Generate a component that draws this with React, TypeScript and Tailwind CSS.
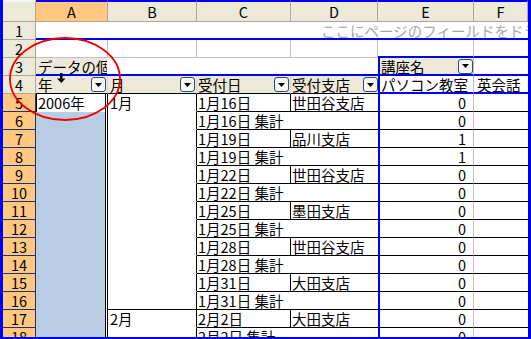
import { clsx } from 'clsx';

type Row = {
  n: number;
  a?: string;
  b?: string;
  c: string;
  d?: string;
  e: string;
  sub?: boolean;
  bEnd?: boolean;
};

const rows: Row[] = [
  { n: 5, a: '2006年', b: '1月', c: '1月16日', d: '世田谷支店', e: '0' },
  { n: 6, c: '1月16日 集計', e: '0', sub: true },
  { n: 7, c: '1月19日', d: '品川支店', e: '1' },
  { n: 8, c: '1月19日 集計', e: '1', sub: true },
  { n: 9, c: '1月22日', d: '世田谷支店', e: '0' },
  { n: 10, c: '1月22日 集計', e: '0', sub: true },
  { n: 11, c: '1月25日', d: '墨田支店', e: '0' },
  { n: 12, c: '1月25日 集計', e: '0', sub: true },
  { n: 13, c: '1月28日', d: '世田谷支店', e: '0' },
  { n: 14, c: '1月28日 集計', e: '0', sub: true },
  { n: 15, c: '1月31日', d: '大田支店', e: '0' },
  { n: 16, c: '1月31日 集計', e: '0', sub: true, bEnd: true },
  { n: 17, b: '2月', c: '2月2日', d: '大田支店', e: '0' },
  { n: 18, c: '2月2日 集計', e: '0', sub: true },
];

function RowHead({ n, sel }: { n: number; sel?: boolean }) {
  return (
    <div
      className={clsx(
        'w-[33px] shrink-0 flex items-center justify-center border-r border-b',
        sel ? 'bg-[#ffc77f] border-[#25306e]' : 'bg-[#ece9d8] border-[#aca899]'
      )}
    >
      {n}
    </div>
  );
}

function ColHead({ w, label, sel }: { w: string; label: string; sel?: boolean }) {
  return (
    <div
      className={clsx(
        w,
        'shrink-0 flex items-center justify-center border-t-2 border-t-[#0000f0] border-r border-r-[#aca899] border-b border-b-[#aca899]',
        sel ? 'bg-[#ffc77f]' : 'bg-[#ece9d8]'
      )}
    >
      {label}
    </div>
  );
}

// little pivot field dropdown
function Drop() {
  return (
    <div className="w-[15px] h-[15px] shrink-0 rounded-[3px] border border-[#2b4a80] bg-[#f7f6f0] flex items-center justify-center">
      <svg width="7" height="4" viewBox="0 0 7 4">
        <path d="M0 0H7L3.5 4Z" fill="#000" />
      </svg>
    </div>
  );
}

export default function App() {
  return (
    <div className="relative w-[531px] h-[339px] overflow-hidden">
      <div className="w-[531px] h-[339px] overflow-hidden bg-white border-l-[3px] border-r-[3px] border-b-2 border-[#0000f0] font-['Noto_Sans_CJK_JP','Noto_Sans',sans-serif] text-[14.5px] leading-[17px] text-black">
        {/* column headers */}
        <div className="flex h-[22px]">
          <div className="w-[33px] shrink-0 bg-[#ece9d8] border-t-2 border-t-[#f4f3ee] border-r border-r-[#aca899] border-b border-b-[#aca899]" />
          <ColHead w="w-[72px]" label="A" sel />
          <ColHead w="w-[89px]" label="B" />
          <ColHead w="w-[94px]" label="C" />
          <ColHead w="w-[87px]" label="D" />
          <ColHead w="w-[96px]" label="E" />
          <ColHead w="flex-1" label="F" />
        </div>

        {/* row 1: page field drop area */}
        <div className="flex h-[18px]">
          <RowHead n={1} />
          <div className="flex-1 border-b-2 border-b-[#0000f0] pl-[285px] whitespace-nowrap overflow-hidden text-[#a8a8a8]">
            ここにページのフィールドをドラッグします
          </div>
        </div>

        {/* row 2 */}
        <div className="flex h-[18px]">
          <RowHead n={2} />
          <div className="w-[72px] shrink-0 border-r border-b border-[#c0c0c0]" />
          <div className="w-[89px] shrink-0 border-r border-b border-[#c0c0c0]" />
          <div className="w-[94px] shrink-0 border-r border-b border-[#c0c0c0]" />
          <div className="w-[87px] shrink-0 border-r border-b border-[#c0c0c0]" />
          <div className="w-[96px] shrink-0 border-r border-r-[#c0c0c0] border-b-2 border-b-[#0000f0]" />
          <div className="flex-1 border-b-2 border-b-[#0000f0]" />
        </div>

        {/* row 3 */}
        <div className="flex h-[18px]">
          <RowHead n={3} />
          <div className="w-[72px] shrink-0 border-b-2 border-b-[#0000f0] flex">
            <div className="w-[71px] bg-[#ece9d8] pl-[2px] whitespace-nowrap overflow-hidden">データの個数</div>
          </div>
          <div className="w-[270px] shrink-0 border-b-2 border-b-[#0000f0]" />
          <div className="w-[96px] shrink-0 border-l-2 border-l-[#0000f0] border-r border-r-[#c0c0c0] border-b-2 border-b-[#0000f0] flex items-center bg-[#ece9d8] pl-px">
            <span className="flex-1">講座名</span>
            <Drop />
          </div>
          <div className="flex-1 border-b-2 border-b-[#0000f0]" />
        </div>

        {/* row 4: row fields */}
        <div className="flex h-[18px]">
          <RowHead n={4} />
          <div className="w-[72px] shrink-0 border-r border-r-[#d8d6cb] border-b border-b-black flex items-center bg-[#ece9d8] pl-[2px] pr-px">
            <span className="flex-1">年</span>
            <Drop />
          </div>
          <div className="w-[89px] shrink-0 border-r border-r-[#d8d6cb] border-b border-b-black flex items-center bg-[#ece9d8] pl-[2px] pr-px">
            <span className="flex-1">月</span>
            <Drop />
          </div>
          <div className="w-[94px] shrink-0 border-r border-r-[#d8d6cb] border-b border-b-black flex items-center bg-[#ece9d8] pl-px pr-px">
            <span className="flex-1">受付日</span>
            <Drop />
          </div>
          <div className="w-[87px] shrink-0 border-b border-b-black flex items-center bg-[#ece9d8] pl-px whitespace-nowrap">
            <span className="flex-1 overflow-hidden">受付支店</span>
            <Drop />
          </div>
          <div className="w-[96px] shrink-0 border-l-2 border-l-[#0000f0] border-r border-r-[#c0c0c0] border-b-2 border-b-[#0000f0] pl-px whitespace-nowrap overflow-hidden">
            パソコン教室
          </div>
          <div className="flex-1 border-b-2 border-b-[#0000f0] pl-[3px] whitespace-nowrap">英会話</div>
        </div>

        {/* data rows */}
        {rows.map((r) => (
          <div key={r.n} className="flex h-[18px] shrink-0">
            <RowHead n={r.n} sel />
            <div className="w-[72px] shrink-0 flex border-r border-black">
              {r.a ? (
                <div className="flex-1 bg-white border-l border-black pl-px whitespace-nowrap">{r.a}</div>
              ) : (
                <div className="flex-1 bg-[#b8cce4]" />
              )}
              <div className="w-px bg-black" />
              <div className="w-px bg-white" />
            </div>
            <div
              className={clsx(
                'w-[89px] shrink-0 border-r border-r-black border-b pl-[2px]',
                r.bEnd ? 'border-b-black' : 'border-b-white'
              )}
            >
              {r.b}
            </div>
            {r.sub ? (
              <div className="w-[181px] shrink-0 border-b border-black pl-px whitespace-nowrap">{r.c}</div>
            ) : (
              <>
                <div className="w-[94px] shrink-0 border-r border-b border-black pl-px whitespace-nowrap">{r.c}</div>
                <div className="w-[87px] shrink-0 border-b border-black pl-px whitespace-nowrap overflow-hidden">
                  {r.d}
                </div>
              </>
            )}
            <div className="w-[96px] shrink-0 border-l-2 border-l-[#0000f0] border-r border-r-[#c0c0c0] border-b border-b-black text-right pr-[7px]">
              {r.e}
            </div>
            <div className="flex-1 border-b border-black" />
          </div>
        ))}
      </div>

      {/* annotation: red circle and drag cursor */}
      <svg className="absolute inset-0 pointer-events-none" width="531" height="339">
        <ellipse cx="65" cy="79" rx="55" ry="41" fill="none" stroke="#f00000" strokeWidth="1.8" />
        <rect x="60" y="73" width="2.5" height="6" fill="#000" />
        <path d="M57 78.5H65.5L61.25 83Z" fill="#000" />
      </svg>
    </div>
  );
}
